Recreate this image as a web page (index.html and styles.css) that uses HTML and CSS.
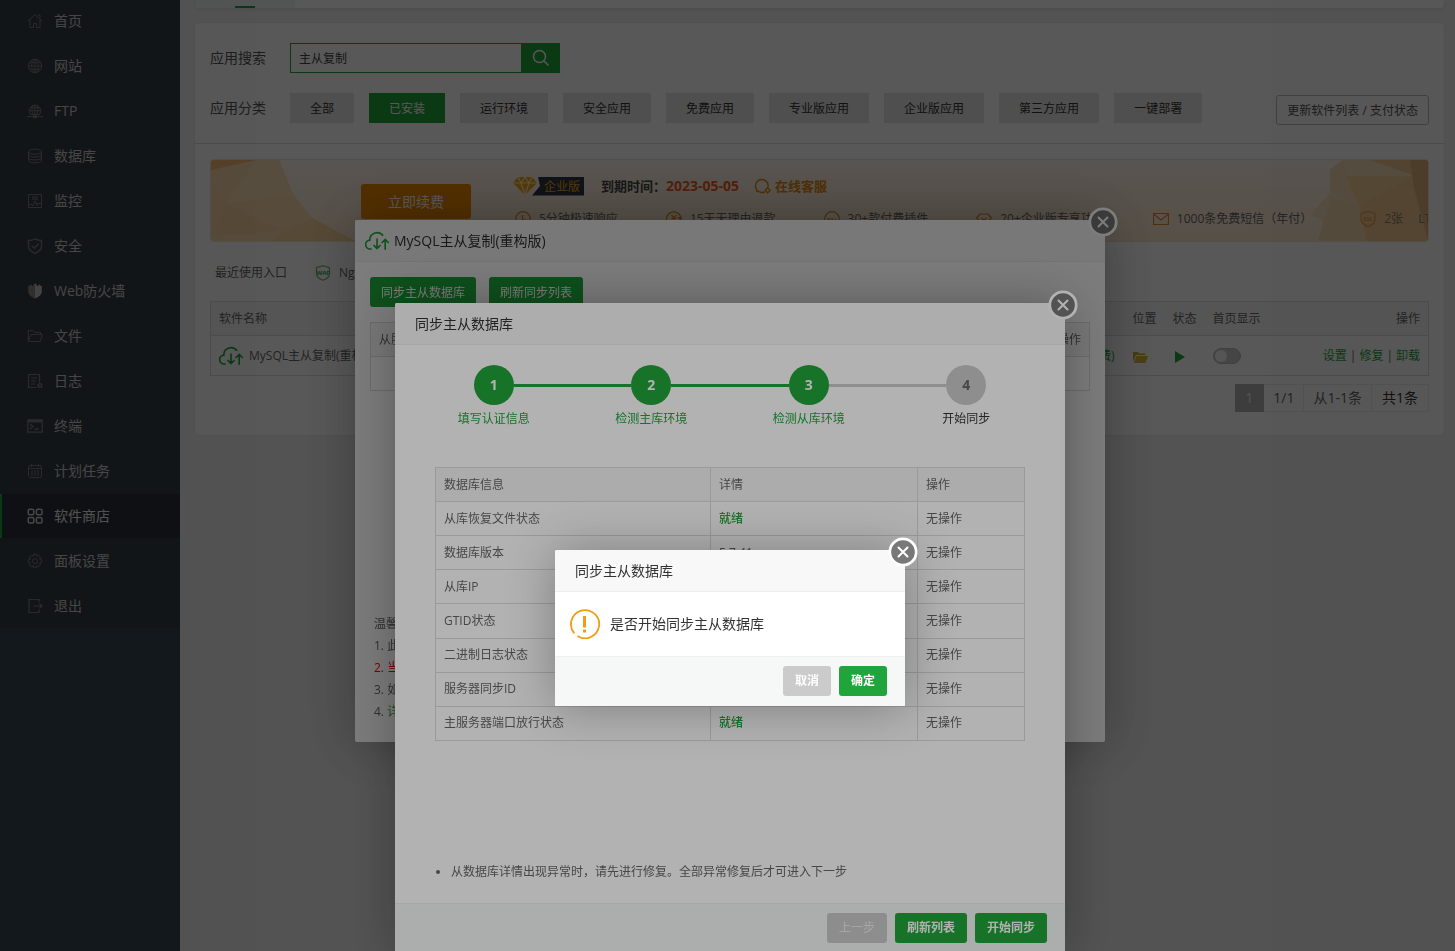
FILE: index.html
```html
<!DOCTYPE html>
<html lang="zh-CN">
<head>
<meta charset="utf-8">
<title>软件商店</title>
<link rel="stylesheet" href="styles.css">
</head>
<body>
<svg class="defs" aria-hidden="true">
  <symbol id="sync" viewBox="0 0 26 22"><path d="M7 19.300H5.600A4.600 4.600 0 0 1 5 10.100 7.600 7.600 0 0 1 18.800 5.600M12.500 8.500V18.800M8.800 15.200L12.500 18.900 16.200 15.200M21 20V9.500M17.300 13.100L21 9.400 24.700 13.100" fill="none" stroke="currentColor" stroke-width="1.700"/></symbol>
  <symbol id="close" viewBox="0 0 30 30"><circle cx="15" cy="15" r="13.200" fill="#787878" stroke="#fff" stroke-width="2.800"/><path d="M10.500 10.500l9 9M19.500 10.500l-9 9" stroke="#fff" stroke-width="2" stroke-linecap="round"/></symbol>
</svg>

<div class="layout">
  <nav class="sidebar">
    <ul class="menu">
      <li><a href="#"><svg viewBox="0 0 16 16"><path d="M.8 8.300L8 1.500l7.200 6.800M3 7v7.500h3.500v-4h3v4H13V7M11 2h2v2.500"/></svg>首页</a></li>
      <li><a href="#"><svg viewBox="0 0 16 16"><circle cx="8" cy="8" r="6.700"/><ellipse cx="8" cy="8" rx="3.300" ry="6.700"/><path d="M8 1.300v13.400M1.300 8h13.400M2.300 4.600h11.400M2.300 11.400h11.400"/></svg>网站</a></li>
      <li><a href="#"><svg viewBox="0 0 16 16"><path d="M3.500 11.500a5.700 5.700 0 1 1 9 0zM8 1.500v10M2.500 7.700h11M3.500 4.700h9M6 11.500c-1.500-3-1.500-7 0-9.500M10 11.500c1.500-3 1.500-7 0-9.500M0 13.700h16"/><path d="M6 13.700h4" stroke-width="3"/></svg>FTP</a></li>
      <li><a href="#"><svg viewBox="0 0 16 16"><ellipse cx="8" cy="3.700" rx="6.500" ry="2.500"/><path d="M1.500 3.700v8.600c0 3.300 13 3.300 13 0V3.700M1.500 6.600c0 3.300 13 3.300 13 0M1.500 9.500c0 3.300 13 3.300 13 0"/></svg>数据库</a></li>
      <li><a href="#"><svg viewBox="0 0 16 16"><path d="M1.500 1.500h13v13h-13zM5 4h6M5 6h6M1.500 11.500h3l1.500 1.500 2-5 2 4.500 1-2h3.500"/></svg>监控</a></li>
      <li><a href="#"><svg viewBox="0 0 16 16"><path d="M8 .7c2 1.400 4 1.800 6.500 1.800v6c0 3-3 5.300-6.500 7-3.500-1.700-6.500-4-6.500-7v-6C4 2.500 6 2.100 8 .7zM4.800 7.800l2.500 2.500 4.200-4.500" stroke-width="1.400"/></svg>安全</a></li>
      <li><a href="#"><svg viewBox="0 0 16 16"><path class="solid-dim" d="M8 .5v15C4.500 14 1.200 12 1.200 8.500V3h1.500V1.800h2V3h1.600V1.500z"/><path class="solid" d="M8 .5v15c3.500-1.500 6.800-3.500 6.800-7V3h-1.500V1.800h-2V3H9.700V1.500z"/></svg>Web防火墙</a></li>
      <li><a href="#"><svg viewBox="0 0 16 16"><path d="M1.300 13.500V2.500H6l1.500 2h6v2M1.300 13.500L4 6.500h11.300l-2 7z"/></svg>文件</a></li>
      <li><a href="#"><svg viewBox="0 0 16 16"><path d="M9.500 14.500h-8v-13h11v8M4 5h6M4 8h5M4 11h4" stroke-width="1.200"/><circle cx="13" cy="12.500" r="1.800" stroke-width="1.600"/></svg>日志</a></li>
      <li><a href="#"><svg viewBox="0 0 16 16"><path d="M.8 2h14.400v12.200H.8zM3 6l3 2.500L3 11M7.500 11h4" stroke-width="1.300"/><path d="M.8 3.200h14.400" stroke-width="2.400"/></svg>终端</a></li>
      <li><a href="#"><svg viewBox="0 0 16 16"><rect x="1.500" y="2.500" width="13" height="12" rx="2"/><path d="M4.500.8v3M11.500.8v3M1.500 5.500h13"/><path d="M4 8h8M4 10h8M4 12h8" stroke-dasharray="2 1"/></svg>计划任务</a></li>
      <li class="active"><a href="#"><svg viewBox="0 0 16 16"><rect x="1.200" y="1.200" width="5.600" height="5.600" rx="1.500"/><rect x="9.400" y="1.200" width="5.600" height="5.600" rx="1.500"/><rect x="1.200" y="9.400" width="5.600" height="5.600" rx="1.500"/><rect x="9.400" y="9.400" width="5.600" height="5.600" rx="1.500"/></svg>软件商店</a></li>
      <li><a href="#"><svg viewBox="0 0 16 16"><circle cx="8" cy="8" r="2.500"/><path d="M6.700 1.300h2.600l.5 2 1.800-1 1.900 1.900-1 1.800 2.200.7v2.600l-2.200.6 1 1.900-1.900 1.900-1.800-1-.5 2H6.700l-.5-2-1.800 1-1.900-1.900 1-1.900-2.200-.6V6.700L3.500 6l-1-1.800 1.900-1.900 1.800 1z"/></svg>面板设置</a></li>
      <li><a href="#"><svg viewBox="0 0 16 16"><path d="M12 4.500v-3H2v13h10v-3M6.500 8H15M12.500 5.500L15 8l-2.500 2.500" stroke-width="1.200"/></svg>退出</a></li>
    </ul>
  </nav>

  <main class="content">
    <div class="tabs"><span class="tab"></span></div>
    <section class="panel">
      <div class="filters">
        <form class="row search-row">
          <label class="row-label" for="q">应用搜索</label>
          <div class="search">
            <input id="q" type="text" value="主从复制">
            <button type="button" aria-label="搜索"><svg viewBox="0 0 18 18"><circle cx="7.500" cy="7.500" r="6" /><path d="M12 12l4.500 4.500"/></svg></button>
          </div>
        </form>
        <div class="row">
          <span class="row-label">应用分类</span>
          <div class="cats">
            <button type="button">全部</button>
            <button type="button" class="on">已安装</button>
            <button type="button">运行环境</button>
            <button type="button">安全应用</button>
            <button type="button">免费应用</button>
            <button type="button">专业版应用</button>
            <button type="button">企业版应用</button>
            <button type="button">第三方应用</button>
            <button type="button">一键部署</button>
          </div>
          <button type="button" class="update">更新软件列表 / 支付状态</button>
        </div>
      </div>

      <div class="banner">
        <svg class="deco-left" viewBox="0 0 146 82"><path fill="#fbdcae" d="M0 0h68l14 34 19 24 45 24H0z"/><path fill="#f6bd70" d="M0 0h45L0 10z"/><path fill="#fbd6a2" d="M0 20l15 24L0 76z"/><path fill="#fbe0b8" d="M15 44L45 0h23l14 34z"/><path fill="#f9d4a0" d="M15 44l58 27-73 5z"/><path fill="#f9d29b" d="M73 71l28-13 45 24H60z"/></svg>
        <svg class="deco-right" viewBox="0 0 118 82"><path fill="#f8dfbd" d="M8 82l5-22-13-5 20-22V10L32 0h86v82z"/><path fill="#f6dab4" d="M20 10L34 0l2 16 13 30L20 30z"/><path fill="#f5cf9a" d="M36 16h68L49 45z"/><path fill="#f3ca94" d="M49 45l55-29 14 60v6H40z"/><path fill="#f6d8b0" d="M8 82l13-44 28 7 8 37z"/><path fill="#efc68c" d="M60 0h45v16z"/><path fill="#dcb27a" d="M100 0h18v80L104 28z"/></svg>
        <button type="button" class="renew">立即续费</button>
        <div class="banner-info">
          <div class="banner-top">
            <span class="edition"><svg viewBox="0 0 24 20"><path fill="#f4a51c" d="M5 1h14l5 6-12 12L0 7z"/><path d="M0 7h24M5 1l3 6 4 12 4-12 3-6M12 1L8 7M12 1l4 6" fill="none" stroke="#fff0c0" stroke-width="1.200"/></svg><span class="edition-name">企业版</span></span>
            <strong class="due">到期时间：</strong><strong class="date">2023-05-05</strong>
            <a class="service" href="#"><svg viewBox="0 0 18 18"><path d="M11 15c-4 1.500-9.500-.5-9.500-6a6.300 6.300 0 0 1 12.600-.5v1.500M4 13l-1.500 2M13.700 10.800l2.500 2.500-2.500 2.500-2.500-2.500z" fill="none" stroke="currentColor" stroke-width="1.400"/></svg>在线客服</a>
          </div>
          <ul class="perks">
            <li><svg viewBox="0 0 16 16"><circle cx="8" cy="8" r="7.300"/><path d="M7.500 4v5h4"/></svg>5分钟极速响应</li>
            <li><svg viewBox="0 0 16 16"><path d="M14 12A7.300 7.300 0 1 1 15 7M12.500 6.500h3.500l-1.500 2zM5.500 4l2.500 3 2.500-3M8 7v5M5.500 7.500h5M5.500 9.500h5"/></svg>15天无理由退款</li>
            <li><svg viewBox="0 0 16 16"><circle cx="8" cy="8" r="7.300"/><text x="8" y="10.500" text-anchor="middle">30+</text></svg>30+款付费插件</li>
            <li><svg viewBox="0 0 16 16"><path d="M4 3h8l3.500 4L8 14 .5 7zM5.500 7L8 9.500 10.500 7"/></svg>20+企业版专享功能</li>
            <li><svg viewBox="0 0 16 16"><path d="M.5 2.500h15v11H.5zM.5 3L8 9l7.500-6"/></svg>1000条免费短信（年付）</li>
            <li class="faint"><svg viewBox="0 0 16 16"><path d="M8 .5l7 2v6c0 3.500-3 5.500-7 7-4-1.500-7-3.500-7-7v-6z"/><text x="8" y="10" text-anchor="middle">SSL</text></svg>2张<span class="ssl-kind">LT</span></li>
          </ul>
        </div>
      </div>

      <div class="recent"><span>最近使用入口</span><a href="#"><svg viewBox="0 0 16 16"><path d="M8 .7l6.500 2v6c0 3-2.500 5-6.500 6.600C4 13.700 1.500 11.700 1.500 8.700v-6z"/><text x="8" y="9.800" text-anchor="middle">WAF</text></svg>Nginx防火墙</a></div>

      <table class="grid soft">
        <colgroup><col><col class="c-price"><col class="c-s"><col class="c-s"><col class="c-home"><col class="c-op"></colgroup>
        <thead><tr><th>软件名称</th><th></th><th>位置</th><th>状态</th><th>首页显示</th><th class="right">操作</th></tr></thead>
        <tbody><tr>
          <td><span class="app"><svg><use href="#sync"/></svg>MySQL主从复制(重构版)</span></td>
          <td class="right green">(免费)</td>
          <td><svg class="folder" viewBox="0 0 15 12"><path fill="#c9a93c" d="M0 11V1h5l1 1.500h6.500V4H3z"/><path fill="#d8b848" d="M3.300 5H15l-2.500 7H.8z"/></svg></td>
          <td><svg class="play" viewBox="0 0 10 12"><path fill="#20a53a" d="M0 0l10 6-10 6z"/></svg></td>
          <td><input type="checkbox" class="switch" aria-label="首页显示"></td>
          <td class="right ops"><a href="#">设置</a><span>|</span><a href="#">修复</a><span>|</span><a href="#">卸载</a></td>
        </tr></tbody>
      </table>

      <div class="pager"><span class="cur">1</span><span>1/1</span><span>从1-1条</span><span class="total">共1条</span></div>
    </section>
  </main>
</div>

<div class="shade shade-1">
  <section class="dialog replica">
    <header class="with-icon"><svg><use href="#sync"/></svg>MySQL主从复制(重构版)</header>
    <button type="button" class="close" aria-label="关闭"><svg><use href="#close"/></svg></button>
    <div class="replica-body">
      <div class="actions"><button type="button">同步主从数据库</button><button type="button">刷新同步列表</button></div>
      <table class="grid">
        <thead><tr><th>从服务器</th><th class="right">操作</th></tr></thead>
        <tbody><tr><td></td><td></td></tr></tbody>
      </table>
      <div class="tips"><p>温馨</p><p>1. 此</p><p class="red">2. 当</p><p>3. 如</p><p>4. <a href="#">详</a></p></div>
    </div>
  </section>
</div>

<div class="shade shade-2">
  <section class="dialog wizard">
    <header>同步主从数据库</header>
    <button type="button" class="close" aria-label="关闭"><svg><use href="#close"/></svg></button>
    <div class="wizard-body">
      <ol class="steps">
        <li class="done"><b>1</b><span>填写认证信息</span></li>
        <li class="done"><b>2</b><span>检测主库环境</span></li>
        <li class="done now"><b>3</b><span>检测从库环境</span></li>
        <li><b>4</b><span>开始同步</span></li>
      </ol>
      <table class="grid lined">
        <colgroup><col class="w-info"><col class="w-detail"><col></colgroup>
        <thead><tr><th>数据库信息</th><th>详情</th><th>操作</th></tr></thead>
        <tbody>
          <tr><td>从库恢复文件状态</td><td class="ready">就绪</td><td>无操作</td></tr>
          <tr><td>数据库版本</td><td>5.7.41</td><td>无操作</td></tr>
          <tr><td>从库IP</td><td></td><td>无操作</td></tr>
          <tr><td>GTID状态</td><td></td><td>无操作</td></tr>
          <tr><td>二进制日志状态</td><td></td><td>无操作</td></tr>
          <tr><td>服务器同步ID</td><td></td><td>无操作</td></tr>
          <tr><td>主服务器端口放行状态</td><td class="ready">就绪</td><td>无操作</td></tr>
        </tbody>
      </table>
      <ul class="note"><li>从数据库详情出现异常时，请先进行修复。全部异常修复后才可进入下一步</li></ul>
    </div>
    <footer><button type="button" class="grey prev">上一步</button><button type="button">刷新列表</button><button type="button">开始同步</button></footer>
  </section>
</div>

<div class="shade shade-3">
  <section class="dialog confirm" role="alertdialog">
    <header>同步主从数据库</header>
    <button type="button" class="close" aria-label="关闭"><svg><use href="#close"/></svg></button>
    <div class="confirm-body">
      <svg viewBox="0 0 30 30"><path d="M4.300 24.300A14.100 14.100 0 1 1 7.500 27.100" fill="none" stroke="#f39c12" stroke-width="1.800"/><path d="M14.500 7v11.500M14.500 20.500v3" stroke="#f39c12" stroke-width="3"/></svg>
      <span>是否开始同步主从数据库</span>
    </div>
    <footer><button type="button" class="grey">取消</button><button type="button">确定</button></footer>
  </section>
</div>
</body>
</html>
```
FILE: styles.css
```css
* { box-sizing: border-box; }
body { margin: 0; background: #f0f0f1; color: #666; font: 12px/20px "Open Sans", "Noto Sans CJK SC", sans-serif; overflow: hidden; }
ul, ol, p { margin: 0; padding: 0; list-style: none; }
a { color: inherit; text-decoration: none; }
button, input { font: inherit; margin: 0; }
button { border: 0; padding: 0; cursor: pointer; }
.defs { display: none; }
.layout { display: flex; min-height: 100vh; }

/* sidebar */
.sidebar { width: 180px; flex: none; background: #3a4656; overflow: hidden; }
.menu { margin-top: -1px; background: #353f46; }
.menu li { border-left: 2px solid transparent; margin-bottom: 1px; }
.menu a { display: flex; align-items: center; gap: 11px; height: 44px; padding-left: 25px; color: #ccc; font-size: 14px; }
.menu svg { width: 16px; height: 16px; fill: none; stroke: #7c7c7c; stroke-width: 1; }
.menu .solid { fill: #c4c4c4; stroke: none; }
.menu .solid-dim { fill: #8a8a8a; stroke: none; }
.menu .active { background: #2c3138; border-left-color: #20a53a; }
.menu .active a { color: #eee; }
.menu .active svg { stroke: #d0d0d0; stroke-width: 1.500; }

/* page */
.content { flex: 1; min-width: 0; padding: 0 11px 0 15px; }
.tabs { height: 8px; background: #fff; border-radius: 0 0 4px 4px; box-shadow: 0 1px 4px rgba(0,0,0,.1); }
.tab { display: flex; justify-content: center; align-items: flex-end; width: 100px; height: 8px; background: #f0f5f3; }
.tab::after { content: ""; width: 20px; height: 2px; background: #20a53a; }
.panel { margin-top: 15px; padding-bottom: 23px; background: #fff; border-radius: 4px; box-shadow: 0 0 2px rgba(0,0,0,.1); }
.filters { padding: 20px 15px; border-bottom: 1px solid #ddd; }
.row { display: flex; align-items: center; }
.search-row { margin-bottom: 20px; }
.row-label { width: 80px; flex: none; font-size: 14px; color: #555; }
.search { display: flex; width: 270px; height: 30px; }
.search input { flex: 1; min-width: 0; padding: 2px 8px 0; border: 1px solid #20a53a; background: #fff; color: #444; outline: 0; }
.search button { width: 38px; background: #20a53a; display: flex; align-items: center; justify-content: center; }
.search svg { width: 18px; height: 18px; fill: none; stroke: #fff; stroke-width: 1.500; }
.cats { display: flex; gap: 15px; }
.cats button { height: 30px; padding: 2px 20px 0; background: #e4e4e4; color: #333; white-space: nowrap; }
.cats .on { background: #20a53a; color: #fff; }
.update { margin: 2px 0 -2px auto; height: 30px; padding: 2px 10px 0; border: 1px solid #bbb; border-radius: 3px; background: #fff; color: #555; white-space: nowrap; }

.banner { position: relative; display: flex; height: 83px; margin: 15px 15px 0; padding-left: 150px; border: 1px solid #f6e0cf; border-radius: 4px; background: linear-gradient(#fff3ea, #fae6cb); overflow: hidden; }
.deco-left, .deco-right { position: absolute; top: 0; height: 82px; }
.deco-left { left: 0; width: 146px; }
.deco-right { right: 0; width: 118px; }
.renew { width: 110px; height: 35px; flex: none; margin-top: 24px; border-radius: 3px; background: #ee8a00; color: #fff; font-size: 14px; }
.banner-info { position: relative; flex: 1; min-width: 0; padding: 15px 0 0 42px; overflow: hidden; }
.banner-top { display: flex; align-items: center; height: 22px; font-size: 13px; white-space: nowrap; }
.edition { display: flex; align-items: center; }
.edition svg { width: 24px; height: 20px; }
.edition-name { height: 19px; margin-left: -5px; padding: 0 4px 0 12px; line-height: 19px; background: #2e3543; color: #f4a51c; font-size: 12px; clip-path: polygon(6px 0, 100% 0, 100% 100%, 0 100%, 8px 50%); }
.due { margin-left: 17px; color: #444; }
.date { color: #ef5a20; font-size: 14px; }
.service { display: flex; align-items: center; gap: 3px; margin-left: 15px; color: #e28a0c; font-weight: bold; }
.service svg { width: 18px; height: 18px; }
.perks { display: flex; gap: 48px; margin: 12px 0 0 2px; white-space: nowrap; }
.perks li { display: flex; align-items: center; gap: 8px; }
.perks svg, .recent svg { width: 16px; height: 16px; flex: none; fill: none; stroke: #e08a20; stroke-width: 1.200; }
.perks text, .recent text { font: bold 6px "Open Sans", sans-serif; fill: #e08a20; stroke: none; }
.perks .faint { color: #8a7c6a; }
.perks .faint svg { opacity: .7; }
.ssl-kind { margin-left: 7px; }

.recent { display: flex; align-items: center; gap: 28px; height: 20px; margin: 21px 20px 18px; }
.recent a { display: flex; align-items: center; gap: 8px; }
.recent svg { stroke: #6fae7c; }
.recent text { fill: #3fa754; }

/* tables */
.grid { width: 100%; border-collapse: collapse; border: 1px solid #ddd; table-layout: fixed; background: #fff; }
.grid th, .grid td { height: 34px; padding: 0 8px; border-bottom: 1px solid #ddd; text-align: left; font-weight: normal; white-space: nowrap; }
.grid th { background: #f6f6f6; }
.grid .right { text-align: right; }
.soft { width: calc(100% - 30px); margin: 0 15px; }
.soft td { height: 40px; }
.c-price { width: 100px; } .c-s { width: 40px; } .c-home { width: 99px; } .c-op { width: 125px; }
.app { display: flex; align-items: center; gap: 5px; }
.app svg { width: 25px; height: 22px; color: #20a53a; }
.green, .ops a { color: #20a53a; }
.ops span { margin: 0 3px; }
.soft .green { padding-right: 10px; }
.folder { display: block; width: 15px; height: 12px; margin-top: 3px; }
.play { display: block; width: 10px; height: 12px; margin: 3px 0 0 2px; }
.switch { appearance: none; display: flex; align-items: center; width: 28px; height: 16px; padding: 1px; border: 1px solid #bbb; border-radius: 8px; background: #c8c8c8; }
.switch::before { content: ""; width: 12px; height: 12px; border-radius: 50%; background: #f6f6f6; }

.pager { display: flex; justify-content: flex-end; margin: 8px 15px 0; font-size: 14px; }
.pager span { height: 28px; padding: 0 9px; border: 1px solid #ececec; border-left: 0; line-height: 26px; }
.pager .cur { padding: 0 10px; border-color: #b2b2b2; background: #b2b2b2; color: #eee; }
.pager .total { padding: 0 10px; color: #333; }

/* dialogs */
.shade { position: fixed; inset: 0; display: flex; justify-content: center; align-items: flex-start; padding-left: 5px; background: rgba(0,0,0,.3); overflow: hidden; }
.shade-1 { padding-top: 220px; }
.shade-2 { padding-top: 303px; }
.shade-3 { padding-top: 550px; }
.dialog { position: relative; flex: none; max-width: 100%; background: #fff; border-radius: 2px; box-shadow: 1px 1px 50px rgba(0,0,0,.3); }
.dialog header { display: flex; align-items: center; height: 42px; padding: 0 20px; border-bottom: 1px solid #eee; background: #f8f8f8; border-radius: 2px 2px 0 0; color: #333; font-size: 14px; }
.dialog .with-icon { gap: 4px; padding-left: 10px; }
.with-icon svg { width: 25px; height: 22px; color: #20a53a; }
.close { position: absolute; top: -13px; right: -13px; width: 30px; height: 30px; background: none; }
.close svg { display: block; width: 30px; height: 30px; }
.dialog footer { display: flex; justify-content: flex-end; gap: 8px; height: 50px; padding: 9px 18px 0; border-top: 1px solid #edf1f2; background: #f6f8f8; }
.dialog footer button { height: 30px; padding: 0 12px; border-radius: 3px; background: #20a53a; color: #fff; font-weight: bold; }
.dialog footer .grey { background: #cbcbcb; }
.dialog footer .prev { color: #eee; font-weight: normal; }

.replica { width: 750px; }
.replica-body { display: flex; flex-direction: column; height: 480px; padding: 15px 15px 19px; }
.actions { display: flex; gap: 13px; margin-bottom: 15px; }
.actions button { height: 30px; padding: 2px 11px 0; border-radius: 3px; background: #20a53a; color: #fff; }
.tips { margin-top: auto; padding-left: 4px; line-height: 22px; }
.tips a { color: #20a53a; }
.tips .red { color: #f00; }

.wizard { width: 670px; }
.wizard-body { display: flex; flex-direction: column; height: 558px; padding: 20px 20px 21px; }
.steps { display: flex; margin-bottom: 38px; }
.steps li { position: relative; flex: 1; display: flex; flex-direction: column; align-items: center; gap: 4px; color: #333; }
.steps b { width: 40px; height: 40px; border-radius: 50%; background: #ccc; color: #666; font-size: 14px; line-height: 40px; text-align: center; }
.steps .done { color: #20a53a; }
.steps .done b { background: #20a53a; color: #fff; }
.steps li:not(:last-child)::after { content: ""; position: absolute; top: 19px; left: calc(50% + 20px); width: calc(100% - 40px); height: 3px; background: #20a53a; }
.steps li.now:not(:last-child)::after { background: #ccc; }
.lined { width: auto; height: 274px; margin: 0 20px; }
.lined th, .lined td { border: 1px solid #ddd; }
.w-info { width: 275px; } .w-detail { width: 207px; }
.lined .ready { color: #20a53a; font-weight: 500; }
.note { margin: auto 20px 0; padding-left: 16px; list-style: disc; }

.confirm { width: 350px; }
.confirm-body { display: flex; align-items: center; gap: 10px; height: 64px; padding: 0 15px; color: #333; font-size: 14px; }
.confirm-body svg { width: 30px; height: 30px; }
```
